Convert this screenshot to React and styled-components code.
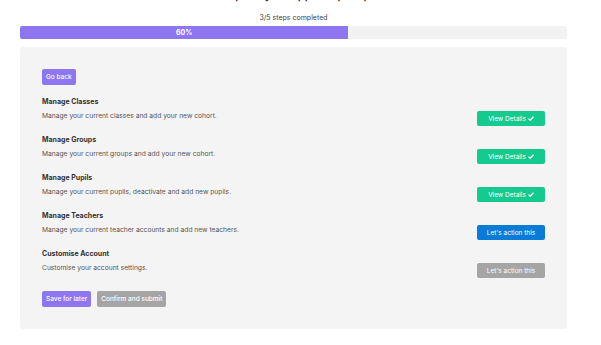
import React from 'react';
import styled, { createGlobalStyle } from 'styled-components';

const GlobalStyle = createGlobalStyle`
  html, body {
    margin: 0;
    padding: 0;
    background: #ffffff;
    font-family: 'Inter', 'Noto Sans', sans-serif;
    color: #333333;
  }
`;

const tasks = [
  { title: 'Manage Classes', text: 'Manage your current classes and add your new cohort.', status: 'done' },
  { title: 'Manage Groups', text: 'Manage your current groups and add your new cohort.', status: 'done' },
  { title: 'Manage Pupils', text: 'Manage your current pupils, deactivate and add new pupils.', status: 'done' },
  { title: 'Manage Teachers', text: 'Manage your current teacher accounts and add new teachers.', status: 'todo' },
  { title: 'Customise Account', text: 'Customise your account settings.', status: 'locked' },
];

const Check = () => (
  <svg width="6" height="5" viewBox="0 0 12 10" aria-hidden="true">
    <path d="M1 5.2 L4.3 8.4 L11 1.6" fill="none" stroke="#fff" strokeWidth="2.6" />
  </svg>
);

const App = () => {
  const done = tasks.filter((t) => t.status === 'done').length;
  const pct = Math.round((done / tasks.length) * 100);
  return (
    <>
      <GlobalStyle />
      <Page>
        <PageTitle>Complete your app setup steps</PageTitle>
        <StepsLabel>{done}/{tasks.length} steps completed</StepsLabel>
        <Progress>
          <ProgressFill style={{ width: `${pct}%` }}>{pct}%</ProgressFill>
        </Progress>
        <Card>
          <Toolbar>
            <Button variant="purple">Go back</Button>
          </Toolbar>
          <TaskList>
            {tasks.map((t) => (
              <Task key={t.title}>
                <TaskTitle>{t.title}</TaskTitle>
                <TaskBody>
                  <TaskText>{t.text}</TaskText>
                  {t.status === 'done' && (
                    <ActionButton variant="green">
                      View Details <Check />
                    </ActionButton>
                  )}
                  {t.status === 'todo' && <ActionButton variant="blue">Let's action this</ActionButton>}
                  {t.status === 'locked' && <ActionButton variant="grey">Let's action this</ActionButton>}
                </TaskBody>
              </Task>
            ))}
          </TaskList>
          <Toolbar>
            <Button variant="purple">Save for later</Button>
            <Button variant="grey">Confirm and submit</Button>
          </Toolbar>
        </Card>
      </Page>
    </>
  );
};

const colors = {
  purple: '#8d76ef',
  green: '#14ca8f',
  blue: '#0b7bd8',
  grey: '#a5a5a5',
};

const Page = styled.div`
  width: 547px;
  margin-left: 20px;
  display: flex;
  flex-direction: column;
  align-items: stretch;
`;

const PageTitle = styled.h2`
  margin: -11px 0 0;
  height: 12px;
  font-size: 11px;
  line-height: 12px;
  font-weight: 600;
  color: #333;
  text-align: center;
`;

const StepsLabel = styled.div`
  margin-top: 12px;
  font-size: 7px;
  line-height: 9px;
  color: #444;
  text-align: center;
`;

const Progress = styled.div`
  margin-top: 4px;
  height: 13px;
  background: #f2f2f2;
  border-radius: 2px;
  overflow: hidden;
  display: flex;
`;

const ProgressFill = styled.div`
  background: ${colors.purple};
  color: #fff;
  font-size: 7px;
  font-weight: 700;
  display: flex;
  align-items: center;
  justify-content: center;
`;

const Card = styled.div`
  margin-top: 8px;
  background: #f4f4f4;
  border-radius: 4px;
  padding: 22px 22px 22px;
  display: flex;
  flex-direction: column;
  gap: 12px;
`;

const Toolbar = styled.div`
  display: flex;
  gap: 6px;
`;

const Button = styled.button`
  border: none;
  border-radius: 2px;
  height: 16px;
  padding: 0 4px;
  background: ${(p) => colors[p.variant]};
  color: #fff;
  font-family: inherit;
  font-size: 6.5px;
  font-weight: 500;
  cursor: pointer;
`;

const TaskList = styled.div`
  display: flex;
  flex-direction: column;
  gap: 9px;
  margin-bottom: 1px;
`;

const Task = styled.div`
  display: flex;
  flex-direction: column;
  gap: 4px;
`;

const TaskTitle = styled.div`
  font-size: 7px;
  line-height: 10px;
  font-weight: 700;
  color: #333;
`;

const TaskBody = styled.div`
  display: flex;
  justify-content: space-between;
  align-items: flex-start;
`;

const TaskText = styled.div`
  font-size: 6.7px;
  line-height: 10px;
  color: #555;
`;

const ActionButton = styled(Button)`
  width: 68px;
  height: 15px;
  padding: 0;
  display: inline-flex;
  align-items: center;
  justify-content: center;
  gap: 2px;
  font-weight: 400;
`;

export default App;
